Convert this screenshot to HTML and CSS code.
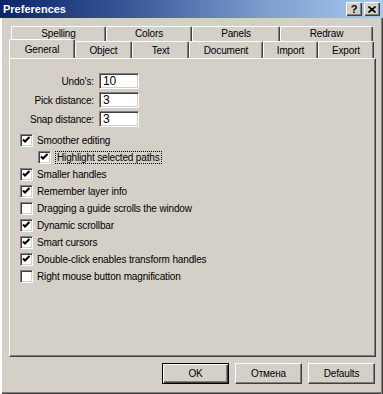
FILE: index.html
```html
<!DOCTYPE html>
<html lang="en">

<head>
    <meta charset="UTF-8">
    <title>Preferences</title>
    <link rel="stylesheet" href="styles.css">
</head>

<body>
    <div class="window">
        <div class="titlebar">
            <span class="title">Preferences</span>
            <div class="tb-buttons">
                <span class="tb-btn help">?</span>
                <span class="tb-btn">
                    <svg width="8" height="7" viewBox="0 0 8 7">
                        <path d="M0.5 0.5 L7.5 6.5 M7.5 0.5 L0.5 6.5" stroke="#000" stroke-width="1.6" />
                    </svg>
                </span>
            </div>
        </div>

        <!-- вкладки в два ряда -->
        <div class="tabs">
            <div class="tab-row back">
                <span class="tab w-spelling">Spelling</span>
                <span class="tab w-colors">Colors</span>
                <span class="tab w-panels">Panels</span>
                <span class="tab w-redraw">Redraw</span>
            </div>
            <div class="tab-row front">
                <span class="tab current w-general">General</span>
                <span class="tab w-object">Object</span>
                <span class="tab w-text">Text</span>
                <span class="tab w-document">Document</span>
                <span class="tab w-import">Import</span>
                <span class="tab w-export">Export</span>
            </div>
        </div>

        <div class="panel">
            <div class="fields">
                <label>Undo's:</label>
                <span class="field">10</span>
                <label>Pick distance:</label>
                <span class="field">3</span>
                <label>Snap distance:</label>
                <span class="field">3</span>
            </div>

            <ul class="checks">
                <li><span class="box on"></span>Smoother editing</li>
                <li class="sub"><span class="box on"></span><span class="focus">Highlight selected paths</span></li>
                <li><span class="box on"></span>Smaller handles</li>
                <li><span class="box on"></span>Remember layer info</li>
                <li><span class="box"></span>Dragging a guide scrolls the window</li>
                <li><span class="box on"></span>Dynamic scrollbar</li>
                <li><span class="box on"></span>Smart cursors</li>
                <li><span class="box on"></span>Double-click enables transform handles</li>
                <li><span class="box"></span>Right mouse button magnification</li>
            </ul>
        </div>

        <div class="buttons">
            <span class="btn default">OK</span>
            <span class="btn">Отмена</span>
            <span class="btn">Defaults</span>
        </div>
    </div>
</body>

</html>
```

FILE: styles.css
```css
* {
    padding: 0;
    margin: 0;
    list-style: none;
    box-sizing: border-box;
}

body {
    background: #d4d0c8;
    font-family: "Liberation Sans", Arial, sans-serif;
    font-size: 10px;
    letter-spacing: -0.15px;
    color: #000;
}

.window {
    width: 383px;
    height: 394px;
    background: #d4d0c8;
    box-shadow: inset 2px 0 0 #fff, inset -1px 0 0 #404040, inset -2px 0 0 #808080,
        inset 0 -1px 0 #404040, inset 0 -2px 0 #808080;
    overflow: hidden;
}

/* заголовок окна */
.titlebar {
    height: 18px;
    display: flex;
    align-items: center;
    justify-content: space-between;
    padding: 0 3px 0 3px;
    background: linear-gradient(to right, #0a246a 0%, #3a5a9a 35%, #7f9fd0 70%, #a6caf0 100%);
}

.title {
    color: #fff;
    font-weight: bold;
    font-size: 11px;
    letter-spacing: 0;
}

.tb-buttons {
    display: flex;
    gap: 2px;
}

.tb-btn {
    width: 16px;
    height: 14px;
    display: flex;
    align-items: center;
    justify-content: center;
    background: #d4d0c8;
    box-shadow: inset 1px 1px 0 #fff, inset -1px -1px 0 #404040, inset -2px -2px 0 #808080;
    font-weight: bold;
    font-size: 11px;
}

/* вкладки */
.tabs {
    margin-top: 8px;
}

.tab-row {
    display: flex;
}

.tab-row.back {
    padding-left: 11px;
    height: 16px;
}

.tab-row.front {
    padding-left: 9px;
    height: 17px;
    margin-top: -1px;
}

.tab {
    display: flex;
    align-items: center;
    justify-content: center;
    background: #d4d0c8;
    border-top: 1px solid #fff;
    border-left: 1px solid #fff;
    border-right: 1px solid #404040;
    border-radius: 2px 2px 0 0;
    box-shadow: inset -1px 0 0 #808080;
    height: 100%;
    padding-top: 1px;
}

.tab-row.back .tab {
    align-items: flex-start;
    padding-top: 1px;
}

.tab.current {
    height: 19px;
    margin-top: -2px;
    position: relative;
    z-index: 1;
}

.w-spelling { width: 95px; }
.w-colors { width: 86px; }
.w-panels { width: 88px; }
.w-redraw { width: 93px; }
.w-general { width: 66px; }
.w-object { width: 57px; }
.w-text { width: 57px; }
.w-document { width: 74px; }
.w-import { width: 55px; }
.w-export { width: 56px; }

/* основная панель */
.panel {
    margin-left: 9px;
    width: 367px;
    height: 299px;
    border-top: 1px solid #fff;
    border-left: 1px solid #fff;
    border-right: 1px solid #404040;
    border-bottom: 1px solid #404040;
    box-shadow: inset -1px -1px 0 #808080;
    padding: 14px 0 0 10px;
}

.fields {
    display: grid;
    grid-template-columns: 74px 40px;
    grid-auto-rows: 16px;
    column-gap: 5px;
    row-gap: 3px;
}

.fields label {
    text-align: right;
    align-self: center;
}

.field {
    background: #fff;
    border-top: 1px solid #808080;
    border-left: 1px solid #808080;
    border-right: 1px solid #fff;
    border-bottom: 1px solid #fff;
    box-shadow: inset 1px 1px 0 #404040, inset -1px -1px 0 #d4d0c8;
    font-size: 12px;
    line-height: 14px;
    padding-left: 3px;
}

.checks {
    margin-top: 5px;
}

.checks li {
    height: 17px;
    display: flex;
    align-items: center;
    gap: 4px;
}

.checks li.sub {
    padding-left: 18px;
}

.box {
    width: 13px;
    height: 13px;
    background: #fff;
    border-top: 1px solid #808080;
    border-left: 1px solid #808080;
    border-right: 1px solid #fff;
    border-bottom: 1px solid #fff;
    box-shadow: inset 1px 1px 0 #404040, inset -1px -1px 0 #d4d0c8;
    flex: none;
}

.box.on {
    background: #fff url("data:image/svg+xml;utf8,<svg xmlns='http://www.w3.org/2000/svg' width='11' height='11'><path d='M2 4.5 L4 6.5 L8.5 2' fill='none' stroke='black' stroke-width='2'/></svg>") no-repeat 0 0;
}

.focus {
    border: 1px dotted #000;
    padding: 0 1px;
    line-height: 11px;
}

/* кнопки внизу */
.buttons {
    display: flex;
    justify-content: flex-end;
    gap: 6px;
    margin-top: 6px;
    padding-right: 8px;
}

.btn {
    width: 67px;
    height: 21px;
    display: flex;
    align-items: center;
    justify-content: center;
    background: #d4d0c8;
    border-top: 1px solid #fff;
    border-left: 1px solid #fff;
    border-right: 1px solid #404040;
    border-bottom: 1px solid #404040;
    box-shadow: inset -1px -1px 0 #808080;
}

.btn.default {
    border: 1px solid #000;
    box-shadow: inset 1px 1px 0 #fff, inset -1px -1px 0 #404040, inset -2px -2px 0 #808080;
}
```
